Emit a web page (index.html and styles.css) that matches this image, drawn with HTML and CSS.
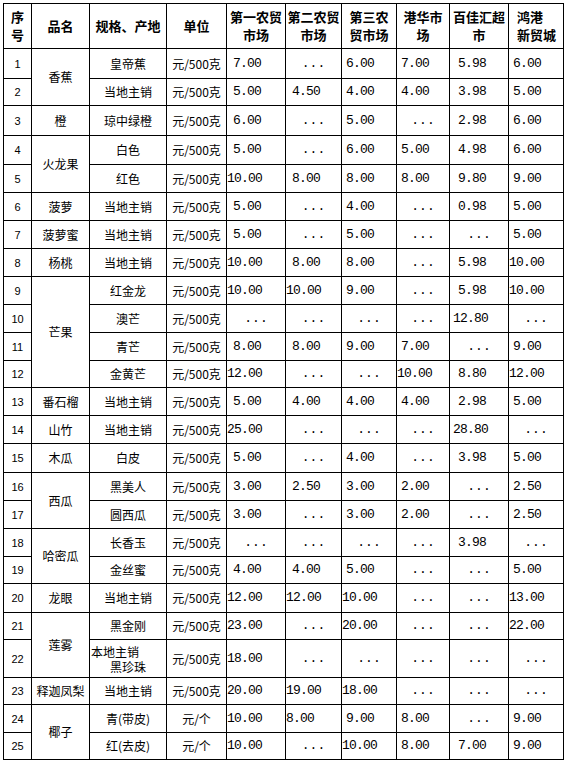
FILE: index.html
```html
<!DOCTYPE html>
<html lang="zh-CN">
<head>
<meta charset="utf-8">
<title>水果价格</title>
<link rel="stylesheet" href="styles.css">
</head>
<body>
<table class="price">
<colgroup>
<col class="c-no"><col class="c-name"><col class="c-spec"><col class="c-unit">
<col class="c-m1"><col class="c-m2"><col class="c-m3"><col class="c-m4"><col class="c-m5"><col class="c-m6">
</colgroup>
<thead>
<tr class="hd">
<th>序<br>号</th><th>品名</th><th>规格、产地</th><th>单位</th>
<th>第一农贸<br>市场</th><th>第二农贸<br>市场</th><th>第三农<br>贸市场</th><th>港华市<br>场</th><th>百佳汇超<br>市</th><th class="lft">鸿港<br>新贸城</th>
</tr>
</thead>
<tbody>
<tr class="h30"><td class="no">1</td><td class="nm" rowspan="2">香蕉</td><td class="sp">皇帝蕉</td><td class="un">元/500克</td><td class="v w">7.00</td><td class="d">...</td><td class="v s">6.00</td><td class="v s">7.00</td><td class="v y">5.98</td><td class="v s">6.00</td></tr>
<tr class="h27"><td class="no">2</td><td class="sp">当地主销</td><td class="un">元/500克</td><td class="v w">5.00</td><td class="v w">4.50</td><td class="v s">4.00</td><td class="v s">4.00</td><td class="v y">3.98</td><td class="v s">5.00</td></tr>
<tr class="h30"><td class="no">3</td><td class="nm">橙</td><td class="sp">琼中绿橙</td><td class="un">元/500克</td><td class="v w">6.00</td><td class="d">...</td><td class="v s">5.00</td><td class="d">...</td><td class="v y">2.98</td><td class="v s">6.00</td></tr>
<tr class="h29"><td class="no">4</td><td class="nm" rowspan="2">火龙果</td><td class="sp">白色</td><td class="un">元/500克</td><td class="v w">5.00</td><td class="d">...</td><td class="v s">6.00</td><td class="v s">5.00</td><td class="v y">4.98</td><td class="v s">6.00</td></tr>
<tr><td class="no">5</td><td class="sp">红色</td><td class="un">元/500克</td><td class="v">10.00</td><td class="v w">8.00</td><td class="v s">8.00</td><td class="v s">8.00</td><td class="v y">9.80</td><td class="v s">9.00</td></tr>
<tr><td class="no">6</td><td class="nm">菠萝</td><td class="sp">当地主销</td><td class="un">元/500克</td><td class="v w">5.00</td><td class="d">...</td><td class="v s">4.00</td><td class="d">...</td><td class="v y">0.98</td><td class="v s">5.00</td></tr>
<tr><td class="no">7</td><td class="nm">菠萝蜜</td><td class="sp">当地主销</td><td class="un">元/500克</td><td class="v w">5.00</td><td class="d">...</td><td class="v s">5.00</td><td class="d">...</td><td class="d">...</td><td class="v s">5.00</td></tr>
<tr><td class="no">8</td><td class="nm">杨桃</td><td class="sp">当地主销</td><td class="un">元/500克</td><td class="v">10.00</td><td class="v w">8.00</td><td class="v s">8.00</td><td class="d">...</td><td class="v y">5.98</td><td class="v">10.00</td></tr>
<tr><td class="no">9</td><td class="nm" rowspan="4">芒果</td><td class="sp">红金龙</td><td class="un">元/500克</td><td class="v">10.00</td><td class="v">10.00</td><td class="v s">9.00</td><td class="d">...</td><td class="v y">5.98</td><td class="v">10.00</td></tr>
<tr><td class="no">10</td><td class="sp">澳芒</td><td class="un">元/500克</td><td class="d">...</td><td class="d">...</td><td class="d">...</td><td class="d">...</td><td class="v x">12.80</td><td class="d">...</td></tr>
<tr><td class="no">11</td><td class="sp">青芒</td><td class="un">元/500克</td><td class="v w">8.00</td><td class="v w">8.00</td><td class="v s">9.00</td><td class="v s">7.00</td><td class="d">...</td><td class="v s">9.00</td></tr>
<tr class="h27"><td class="no">12</td><td class="sp">金黄芒</td><td class="un">元/500克</td><td class="v">12.00</td><td class="d">...</td><td class="d">...</td><td class="v">10.00</td><td class="v y">8.80</td><td class="v">12.00</td></tr>
<tr><td class="no">13</td><td class="nm">番石榴</td><td class="sp">当地主销</td><td class="un">元/500克</td><td class="v w">5.00</td><td class="v w">4.00</td><td class="v s">4.00</td><td class="v s">4.00</td><td class="v y">2.98</td><td class="v s">5.00</td></tr>
<tr><td class="no">14</td><td class="nm">山竹</td><td class="sp">当地主销</td><td class="un">元/500克</td><td class="v">25.00</td><td class="d">...</td><td class="d">...</td><td class="d">...</td><td class="v x">28.80</td><td class="d">...</td></tr>
<tr class="h29"><td class="no">15</td><td class="nm">木瓜</td><td class="sp">白皮</td><td class="un">元/500克</td><td class="v w">5.00</td><td class="d">...</td><td class="v s">4.00</td><td class="d">...</td><td class="v y">3.98</td><td class="v s">5.00</td></tr>
<tr><td class="no">16</td><td class="nm" rowspan="2">西瓜</td><td class="sp">黑美人</td><td class="un">元/500克</td><td class="v w">3.00</td><td class="v w">2.50</td><td class="v s">3.00</td><td class="v s">2.00</td><td class="d">...</td><td class="v s">2.50</td></tr>
<tr><td class="no">17</td><td class="sp">圆西瓜</td><td class="un">元/500克</td><td class="v w">3.00</td><td class="d">...</td><td class="v s">3.00</td><td class="v s">2.00</td><td class="d">...</td><td class="v s">2.50</td></tr>
<tr><td class="no">18</td><td class="nm" rowspan="2">哈密瓜</td><td class="sp">长香玉</td><td class="un">元/500克</td><td class="d">...</td><td class="d">...</td><td class="d">...</td><td class="d">...</td><td class="v y">3.98</td><td class="d">...</td></tr>
<tr class="h27"><td class="no">19</td><td class="sp">金丝蜜</td><td class="un">元/500克</td><td class="v w">4.00</td><td class="v w">4.00</td><td class="v s">5.00</td><td class="d">...</td><td class="d">...</td><td class="v s">5.00</td></tr>
<tr class="h29"><td class="no">20</td><td class="nm">龙眼</td><td class="sp">当地主销</td><td class="un">元/500克</td><td class="v">12.00</td><td class="v">12.00</td><td class="v">10.00</td><td class="d">...</td><td class="d">...</td><td class="v">13.00</td></tr>
<tr class="h27"><td class="no">21</td><td class="nm" rowspan="2">莲雾</td><td class="sp">黑金刚</td><td class="un">元/500克</td><td class="v">23.00</td><td class="d">...</td><td class="v">20.00</td><td class="d">...</td><td class="d">...</td><td class="v">22.00</td></tr>
<tr class="h38"><td class="no">22</td><td class="sp two"><span class="l1">本地主销</span><span class="l2">黑珍珠</span></td><td class="un">元/500克</td><td class="v">18.00</td><td class="d">...</td><td class="d">...</td><td class="d">...</td><td class="d">...</td><td class="d">...</td></tr>
<tr class="h27"><td class="no">23</td><td class="nm">释迦凤梨</td><td class="sp">当地主销</td><td class="un">元/500克</td><td class="v">20.00</td><td class="v">19.00</td><td class="v">18.00</td><td class="d">...</td><td class="d">...</td><td class="d">...</td></tr>
<tr><td class="no">24</td><td class="nm" rowspan="2">椰子</td><td class="sp">青(带皮)</td><td class="un">元/个</td><td class="v">10.00</td><td class="v">8.00</td><td class="v s">9.00</td><td class="v s">8.00</td><td class="d">...</td><td class="v s">9.00</td></tr>
<tr class="h27"><td class="no">25</td><td class="sp">红(去皮)</td><td class="un">元/个</td><td class="v">10.00</td><td class="d">...</td><td class="v">10.00</td><td class="v s">8.00</td><td class="v y">7.00</td><td class="v s">9.00</td></tr>
</tbody>
</table>
</body>
</html>
```
FILE: styles.css
```css
html, body {
  background: #fff;
}
body {
  margin: 3px;
  font-family: "Noto Sans CJK SC", sans-serif;
  color: #000;
}
.price {
  border-collapse: collapse;
  table-layout: fixed;
  width: 560px;
  border: 1px solid #000;
}
.c-no { width: 28px; }
.c-name { width: 58px; }
.c-spec { width: 77px; }
.c-unit { width: 60px; }
.c-m1 { width: 59px; }
.c-m2 { width: 56px; }
.c-m3 { width: 55px; }
.c-m4 { width: 53px; }
.c-m5 { width: 59px; }
.c-m6 { width: 55px; }

.price th,
.price td {
  border: 1px solid #000;
  padding: 0;
  vertical-align: middle;
  overflow: hidden;
  white-space: nowrap;
}
.price tr { height: 28px; }
.price tr.hd { height: 45px; }
.price tr.h27 { height: 27px; }
.price tr.h29 { height: 29px; }
.price tr.h30 { height: 30px; }
.price tr.h38 { height: 38px; }

.price th {
  font-size: 13px;
  font-weight: bold;
  line-height: 18px;
  text-align: center;
}
.price th.lft {
  text-align: left;
  padding-left: 8px;
}
.no {
  font-family: "Liberation Sans", sans-serif;
  font-size: 11px;
  text-align: center;
}
.nm, .sp, .un {
  font-size: 12px;
  line-height: 16px;
  text-align: center;
}
.sp.two {
  line-height: 15px;
}
.sp.two .l1 {
  display: block;
  text-align: left;
  padding-left: 1px;
}
.sp.two .l2 {
  display: block;
  text-align: center;
}
.v, .d {
  font-family: "Liberation Mono", monospace;
  font-size: 13px;
  letter-spacing: -0.8px;
  line-height: 16px;
}
.v {
  text-align: left;
  padding-left: 1px;
}
.v.s { padding-left: 4px; }
.v.w { padding-left: 6px; }
.v.x { padding-left: 3px; }
.v.y { padding-left: 8px; }
.d {
  text-align: center;
  letter-spacing: 0;
}
```
